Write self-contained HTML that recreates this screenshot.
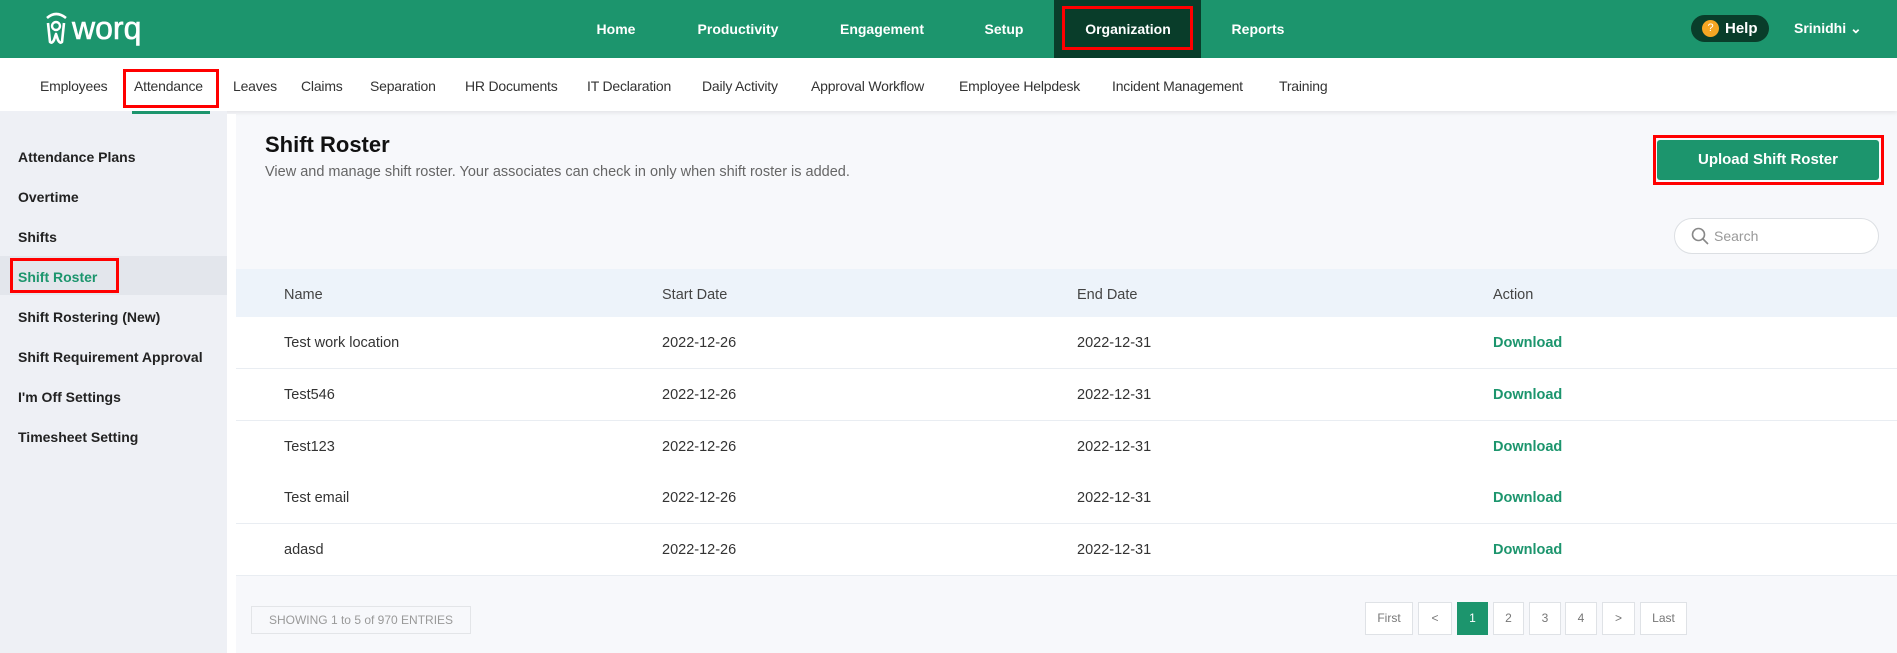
<!DOCTYPE html>
<html><head><meta charset="utf-8"><style>
*{margin:0;padding:0;box-sizing:border-box}
body{width:1897px;height:653px;overflow:hidden;font-family:"Liberation Sans",sans-serif;background:#f7f8fb;position:relative;color:#222}
.a{position:absolute;white-space:nowrap}
.hdr{position:absolute;left:0;top:0;width:1897px;height:58px;background:#1c956d}
.nav{font-weight:bold;color:#fff;font-size:14px;top:21px;transform:translateX(-50%)}
.sub{position:absolute;left:0;top:58px;width:1897px;height:53px;background:#fff;box-shadow:0 2px 4px rgba(0,0,0,.08)}
.si{font-size:14px;color:#333;top:78px;letter-spacing:-0.2px}
.side{position:absolute;left:0;top:111px;width:227px;height:542px;background:#eef0f5}
.sl{font-size:14px;color:#222;left:18px;font-weight:bold}
.row{position:absolute;left:236px;width:1661px;height:52px;background:#fff;border-bottom:1px solid #e9edf2}
.c{font-size:14.5px;color:#333;top:18px}
.dl{color:#1c956d;font-weight:bold}
.pg{position:absolute;top:602px;height:33px;border:1px solid #dfe2e6;background:#fff;color:#777;font-size:12px;text-align:center;line-height:31px}
</style></head><body>
<div class="hdr"></div>
<svg class="a" style="left:44px;top:10px" width="115" height="38" viewBox="0 0 115 38">
<path d="M3 8 Q12 0 22 8" stroke="#fff" stroke-width="2.6" fill="none"/>
<path d="M4 13 L6 32 Q8 34 10 30 L12 24 L14 30 Q16 34 18 32 L20 13" stroke="#fff" stroke-width="2.6" fill="none" stroke-linejoin="round"/>
<circle cx="12" cy="16" r="4" stroke="#fff" stroke-width="2.4" fill="none"/>
<text x="28" y="29" fill="#fff" font-family="Liberation Sans" font-size="32" stroke="#fff" stroke-width="0.6">worq</text>
</svg>
<div class="a nav" style="left:616px">Home</div>
<div class="a nav" style="left:738px">Productivity</div>
<div class="a nav" style="left:882px">Engagement</div>
<div class="a nav" style="left:1004px">Setup</div>
<div class="a" style="left:1054px;top:0;width:147px;height:58px;background:#093d2a"></div>
<div class="a" style="left:1062px;top:6px;width:131px;height:44px;border:3px solid #f00"></div>
<div class="a nav" style="left:1128px">Organization</div>
<div class="a nav" style="left:1258px">Reports</div>
<div class="a" style="left:1691px;top:15px;width:78px;height:27px;border-radius:14px;background:#093d2a"></div>
<div class="a" style="left:1702px;top:20px;width:17px;height:17px;border-radius:50%;background:#f5a623;color:#fff;font-size:11px;text-align:center;line-height:17px">?</div>
<div class="a" style="left:1725px;top:20px;color:#fff;font-size:15px;font-weight:bold">Help</div>
<div class="a" style="left:1794px;top:20px;color:#fff;font-size:14px;font-weight:bold">Srinidhi ⌄</div>
<div class="sub"></div>
<div class="side"></div>
<div class="a si" style="left:40px">Employees</div>
<div class="a si" style="left:134px">Attendance</div>
<div class="a" style="left:123px;top:69px;width:96px;height:39px;border:3px solid #f00"></div>
<div class="a" style="left:132px;top:111px;width:78px;height:3px;background:#1c956d"></div>
<div class="a si" style="left:233px">Leaves</div>
<div class="a si" style="left:301px">Claims</div>
<div class="a si" style="left:370px">Separation</div>
<div class="a si" style="left:465px">HR Documents</div>
<div class="a si" style="left:587px">IT Declaration</div>
<div class="a si" style="left:702px">Daily Activity</div>
<div class="a si" style="left:811px">Approval Workflow</div>
<div class="a si" style="left:959px">Employee Helpdesk</div>
<div class="a si" style="left:1112px">Incident Management</div>
<div class="a si" style="left:1279px">Training</div>
<div class="a" style="left:227px;top:114px;width:9px;height:539px;background:#fff"></div>
<div class="a" style="left:0;top:256px;width:227px;height:39px;background:#e3e6ec"></div>
<div class="a sl" style="top:149px">Attendance Plans</div>
<div class="a sl" style="top:189px">Overtime</div>
<div class="a sl" style="top:229px">Shifts</div>
<div class="a sl" style="top:269px;color:#1c956d">Shift Roster</div>
<div class="a" style="left:10px;top:258px;width:109px;height:35px;border:3px solid #f00"></div>
<div class="a sl" style="top:309px">Shift Rostering (New)</div>
<div class="a sl" style="top:349px">Shift Requirement Approval</div>
<div class="a sl" style="top:389px">I'm Off Settings</div>
<div class="a sl" style="top:429px">Timesheet Setting</div>
<div class="a" style="left:265px;top:132px;font-size:22px;font-weight:bold;color:#111">Shift Roster</div>
<div class="a" style="left:265px;top:164px;font-size:14.5px;color:#666">View and manage shift roster. Your associates can check in only when shift roster is added.</div>
<div class="a" style="left:1653px;top:135px;width:231px;height:50px;border:3px solid #f00"></div>
<div class="a" style="left:1657px;top:140px;width:222px;height:40px;background:#1c956d;border-radius:3px;color:#fff;font-weight:bold;font-size:15px;text-align:center;line-height:40px">Upload Shift Roster</div>
<div class="a" style="left:1674px;top:218px;width:205px;height:36px;border:1px solid #dcdfe3;border-radius:18px;background:#fff"></div>
<svg class="a" style="left:1691px;top:227px" width="18" height="18"><circle cx="7.5" cy="7.5" r="6" stroke="#888" stroke-width="1.6" fill="none"/><line x1="12" y1="12" x2="17" y2="17" stroke="#888" stroke-width="1.6"/></svg>
<div class="a" style="left:1714px;top:228px;font-size:14px;color:#999">Search</div>
<div class="a" style="left:236px;top:269px;width:1661px;height:48px;background:#edf3fa"></div>
<div class="a c" style="left:284px;top:287px;color:#444">Name</div>
<div class="a c" style="left:662px;top:287px;color:#444">Start Date</div>
<div class="a c" style="left:1077px;top:287px;color:#444">End Date</div>
<div class="a c" style="left:1493px;top:287px;color:#444">Action</div>
<div class="row" style="top:317px"><div class="a c" style="left:48px">Test work location</div><div class="a c" style="left:426px">2022-12-26</div><div class="a c" style="left:841px">2022-12-31</div><div class="a c dl" style="left:1257px">Download</div></div>
<div class="row" style="top:369px"><div class="a c" style="left:48px">Test546</div><div class="a c" style="left:426px">2022-12-26</div><div class="a c" style="left:841px">2022-12-31</div><div class="a c dl" style="left:1257px">Download</div></div>
<div class="row" style="top:421px"><div class="a c" style="left:48px">Test123</div><div class="a c" style="left:426px">2022-12-26</div><div class="a c" style="left:841px">2022-12-31</div><div class="a c dl" style="left:1257px">Download</div></div>
<div class="row" style="top:472px"><div class="a c" style="left:48px">Test email</div><div class="a c" style="left:426px">2022-12-26</div><div class="a c" style="left:841px">2022-12-31</div><div class="a c dl" style="left:1257px">Download</div></div>
<div class="row" style="top:524px"><div class="a c" style="left:48px">adasd</div><div class="a c" style="left:426px">2022-12-26</div><div class="a c" style="left:841px">2022-12-31</div><div class="a c dl" style="left:1257px">Download</div></div>
<div class="a" style="left:251px;top:606px;width:220px;height:28px;border:1px solid #e3e5e8;color:#999;font-size:12px;text-align:center;line-height:26px">SHOWING 1 to 5 of 970 ENTRIES</div>
<div class="pg" style="left:1365px;width:48px">First</div>
<div class="pg" style="left:1418px;width:34px">&lt;</div>
<div class="pg" style="left:1457px;width:31px;background:#1c956d;border-color:#1c956d;color:#fff">1</div>
<div class="pg" style="left:1493px;width:31px">2</div>
<div class="pg" style="left:1529px;width:32px">3</div>
<div class="pg" style="left:1565px;width:32px">4</div>
<div class="pg" style="left:1602px;width:33px">&gt;</div>
<div class="pg" style="left:1640px;width:47px">Last</div>
</body></html>
